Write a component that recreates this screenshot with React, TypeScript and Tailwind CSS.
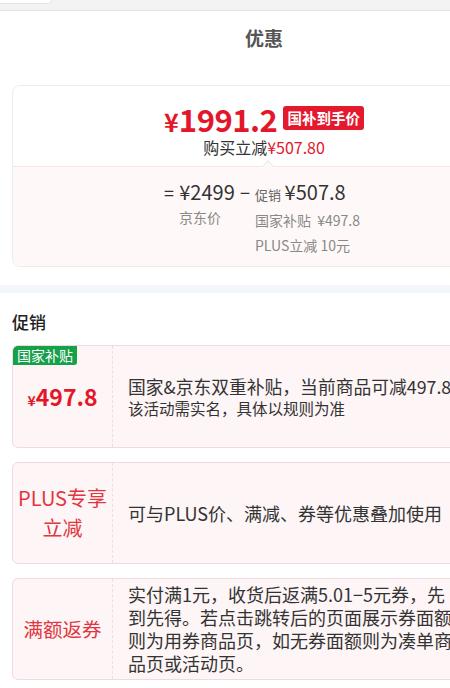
import React from "react";

const FONT = { fontFamily: '"Noto Sans CJK SC", "Noto Sans", sans-serif' };

type Promo = {
  left: React.ReactNode;
  badge?: string;
  body: React.ReactNode;
  height: string;
};

function PromoCard({ left, badge, body, height }: Promo) {
  return (
    <div
      className={`relative flex w-[504px] ${height} rounded-[6px] border border-[#f1dade] bg-[#fdf5f6] overflow-hidden`}
    >
      {badge && (
        <div className="absolute left-0 top-0 h-[19px] px-[4px] bg-[#15a049] text-white text-[14px] leading-[19px] rounded-br-[3px]">
          {badge}
        </div>
      )}
      <div className="w-[100px] shrink-0 flex items-center justify-center border-r border-dashed border-[#efdde0]">
        {left}
      </div>
      <div className="flex items-center pl-[15px]">{body}</div>
    </div>
  );
}

export default function App() {
  return (
    <div className="w-[450px] h-[688px] overflow-hidden bg-white" style={FONT}>
      <div className="w-[528px]">
        {/* top strip */}
        <div className="relative h-[11px] bg-[#f3f3f3] border-b border-[#e2e2e2]">
          <div className="absolute left-0 top-0 w-[52px] h-[4px] bg-white rounded-br-[10px] border-r border-b border-[#e6e6e6]" />
        </div>

        <div className="h-[54px] flex items-center justify-center text-[19px] font-bold text-[#555]">
          优惠
        </div>

        {/* price summary */}
        <div className="mt-[20px] mx-[12px] border border-[#ececec] rounded-[8px] overflow-hidden">
          <div className="h-[80px] pt-[14px] flex flex-col items-center">
            <div className="h-[36px] flex items-center gap-[6px]">
              <span className="text-[#e3172a] font-bold leading-none">
                <span className="text-[25px]">¥</span>
                <span className="text-[31px] tracking-[-0.5px]">1991.2</span>
              </span>
              <span className="h-[24px] px-[4px] flex items-center rounded-[3px] bg-[#e5192d] text-white text-[14.5px] font-bold">
                国补到手价
              </span>
            </div>
            <div className="leading-[22px] text-[16px] text-[#333]">
              购买立减<span className="text-[#e3172a]">¥507.80</span>
            </div>
          </div>
          <div className="relative h-[100px] bg-[#fff8f8] border-t border-[#f5e6e8] pt-[12px] flex justify-center">
            <div className="absolute left-[251px] -top-[5px] w-[8px] h-[8px] rotate-45 bg-[#fff8f8] border-l border-t border-[#f5e6e8]" />
            <div className="flex items-start text-[#333] mr-[4px]">
              <span className="leading-[26px] text-[18px] mr-[5px]">=</span>
              <div className="flex flex-col items-center">
                <span className="leading-[26px] text-[20px]">¥2499</span>
                <span className="leading-[25px] text-[14px] text-[#888] pr-[14px]">京东价</span>
              </div>
              <span className="leading-[26px] text-[18px] mx-[5px]">−</span>
              <div className="flex flex-col">
                <span className="leading-[26px]">
                  <span className="text-[13px] text-[#666]">促销</span>{" "}
                  <span className="text-[20px]">¥507.8</span>
                </span>
                <span className="leading-[25px] text-[14px] text-[#888] whitespace-pre">国家补贴  ¥497.8</span>
                <span className="leading-[25px] text-[14px] text-[#888]">PLUS立减 10元</span>
              </div>
            </div>
          </div>
        </div>

        <div className="mt-[18px] h-[8px] bg-[#f3f6fa]" />

        <div className="pt-[17px] pl-[12px] leading-[24px] text-[17px] text-[#222] font-medium">
          促销
        </div>

        <div className="mt-[11px] mx-[12px] flex flex-col gap-[14px]">
          <PromoCard
            badge="国家补贴"
            height="h-[103px]"
            left={
              <span className="text-[#e3172a] font-bold leading-none">
                <span className="text-[14px]">¥</span>
                <span className="text-[23px]">497.8</span>
              </span>
            }
            body={
              <div className="text-[#333]">
                <div className="whitespace-nowrap text-[17.8px] leading-[22px]">
                  国家&amp;京东双重补贴，当前商品可减497.8元
                </div>
                <div className="whitespace-nowrap text-[15.5px] leading-[22px]">
                  该活动需实名，具体以规则为准
                </div>
              </div>
            }
          />
          <PromoCard
            height="h-[102px]"
            left={
              <span className="text-center text-[#e2353f] text-[20px] leading-[30px]">
                PLUS专享
                <br />
                立减
              </span>
            }
            body={
              <div className="whitespace-nowrap text-[18px] leading-[24px] text-[#333]">
                可与PLUS价、满减、券等优惠叠加使用
              </div>
            }
          />
          <PromoCard
            height="h-[102px]"
            left={<span className="text-[#e2353f] text-[19.5px] leading-[26px]">满额返券</span>}
            body={
              <div className="w-[332px] text-[18px] leading-[23px] text-[#333]">
                实付满1元，收货后返满5.01−5元券，先到先得。若点击跳转后的页面展示券面额则为用券商品页，如无券面额则为凑单商品页或活动页。
              </div>
            }
          />
        </div>
      </div>
    </div>
  );
}
